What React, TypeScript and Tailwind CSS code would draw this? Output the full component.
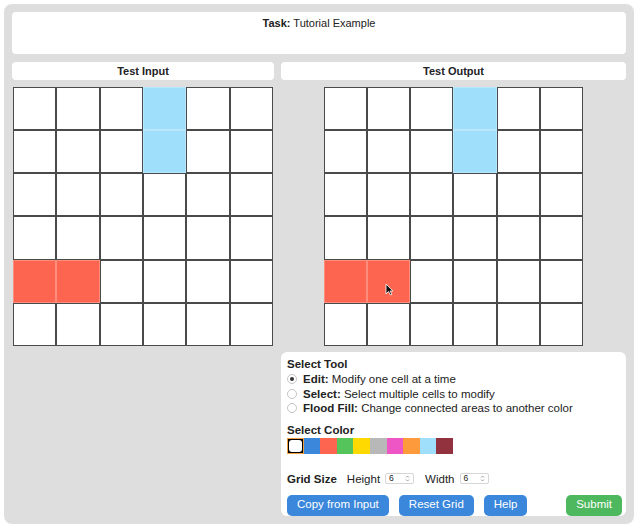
import React from "react";

const PALETTE = [
  "#ffffff",
  "#3a87dc",
  "#fd6550",
  "#55c45b",
  "#ffd900",
  "#b8b8b8",
  "#ef56c5",
  "#fd9a3b",
  "#a0dffb",
  "#92323f",
];

const GRID = [
  [0, 0, 0, 8, 0, 0],
  [0, 0, 0, 8, 0, 0],
  [0, 0, 0, 0, 0, 0],
  [0, 0, 0, 0, 0, 0],
  [2, 2, 0, 0, 0, 0],
  [0, 0, 0, 0, 0, 0],
];

const Grid = ({ cursor }: { cursor?: boolean }) => (
  <div className="grid grid-cols-6 w-[260px]">
    {GRID.flat().map((v, i) => (
      <div
        key={i}
        className={`relative h-[43.2px] border ${v === 0 ? "border-[#4a4a4a]" : "border-[#ffffff44]"}`}
        style={{ backgroundColor: PALETTE[v] }}
      >
        {cursor && i === 25 && (
          <svg className="absolute left-[17px] top-[22px]" width="9" height="13" viewBox="0 0 9 13">
            <path d="M1 1 L1 11 L3.5 8.5 L5.5 12 L7 11.3 L5 8 L8 8 Z" fill="#111" stroke="#fff" strokeWidth="0.8" />
          </svg>
        )}
      </div>
    ))}
  </div>
);

const Radio = ({ checked, label, desc }: { checked?: boolean; label: string; desc: string }) => (
  <div className="flex items-center gap-[6px] h-[14.5px]">
    <span className="w-[10px] h-[10px] rounded-full border border-[#c4c4c4] bg-white flex items-center justify-center">
      {checked && <span className="w-[4px] h-[4px] rounded-full bg-[#333]" />}
    </span>
    <span>
      <b className="font-bold">{label}:</b> {desc}
    </span>
  </div>
);

const NumBox = () => (
  <span className="inline-flex items-center justify-between w-[29px] h-[11px] border border-[#d6d6d6] rounded-[2px] px-[3px] text-[8.5px] leading-none bg-white">
    <span>6</span>
    <svg width="5" height="7" viewBox="0 0 5 7">
      <path d="M1 2.5 L2.5 1 L4 2.5 M1 4.5 L2.5 6 L4 4.5" fill="none" stroke="#888" strokeWidth="0.8" />
    </svg>
  </span>
);

const Btn = ({ children, green }: { children: React.ReactNode; green?: boolean }) => (
  <button
    className={`h-[21px] px-[10px] rounded-[5px] text-white text-[11.5px] leading-none ${green ? "bg-[#4db85d]" : "bg-[#3a87dc]"}`}
  >
    {children}
  </button>
);

export default function App() {
  return (
    <div className="w-[640px] h-[532px] bg-white p-1 text-[#222]" style={{ fontFamily: '"Liberation Sans", Arial, sans-serif' }}>
      <div className="w-[630px] h-[520px] bg-[#dedede] rounded-[8px] p-2 flex flex-col gap-2">
        <div className="h-[42px] bg-white rounded-[4px] text-center text-[11px] pt-[3px]">
          <b className="font-bold">Task:</b> Tutorial Example
        </div>
        <div className="flex gap-[7px]">
          <div className="w-[262px] flex flex-col items-center gap-[7px]">
            <div className="w-full h-[18px] bg-white rounded-[4px] text-center text-[11px] font-bold leading-[18px]">
              Test Input
            </div>
            <Grid />
          </div>
          <div className="flex-1 flex flex-col items-center">
            <div className="w-full h-[18px] bg-white rounded-[4px] text-center text-[11px] font-bold leading-[18px]">
              Test Output
            </div>
            <div className="mt-[7px]">
              <Grid cursor />
            </div>
            <div className="mt-[6px] w-[345px] self-start h-[164px] bg-white rounded-[6px] pl-[6px] pr-[4px] pt-[5px] text-[11.5px] leading-[14px]">
              <div className="font-bold">Select Tool</div>
              <div className="mt-[1px]">
                <Radio checked label="Edit" desc="Modify one cell at a time" />
                <Radio label="Select" desc="Select multiple cells to modify" />
                <Radio label="Flood Fill" desc="Change connected areas to another color" />
              </div>
              <div className="font-bold mt-[7px]">Select Color</div>
              <div className="flex mt-[1px]">
                {PALETTE.map((c, i) => (
                  <div
                    key={i}
                    className={`w-[16.6px] h-[16px] ${i === 0 ? "border border-[#f0a040] p-[1px]" : ""}`}
                    style={{ backgroundColor: i === 0 ? "#000" : c }}
                  >
                    {i === 0 && <div className="w-full h-full bg-white rounded-[3px]" />}
                  </div>
                ))}
              </div>
              <div className="flex items-center mt-[18px] h-[14px]">
                <b className="font-bold">Grid Size</b>
                <span className="ml-[10px] mr-[5px]">Height</span>
                <NumBox />
                <span className="ml-[11px] mr-[5px]">Width</span>
                <NumBox />
              </div>
              <div className="flex items-center gap-[10px] mt-[9px]">
                <Btn>Copy from Input</Btn>
                <Btn>Reset Grid</Btn>
                <Btn>Help</Btn>
                <div className="ml-auto">
                  <Btn green>Submit</Btn>
                </div>
              </div>
            </div>
          </div>
        </div>
      </div>
    </div>
  );
}
